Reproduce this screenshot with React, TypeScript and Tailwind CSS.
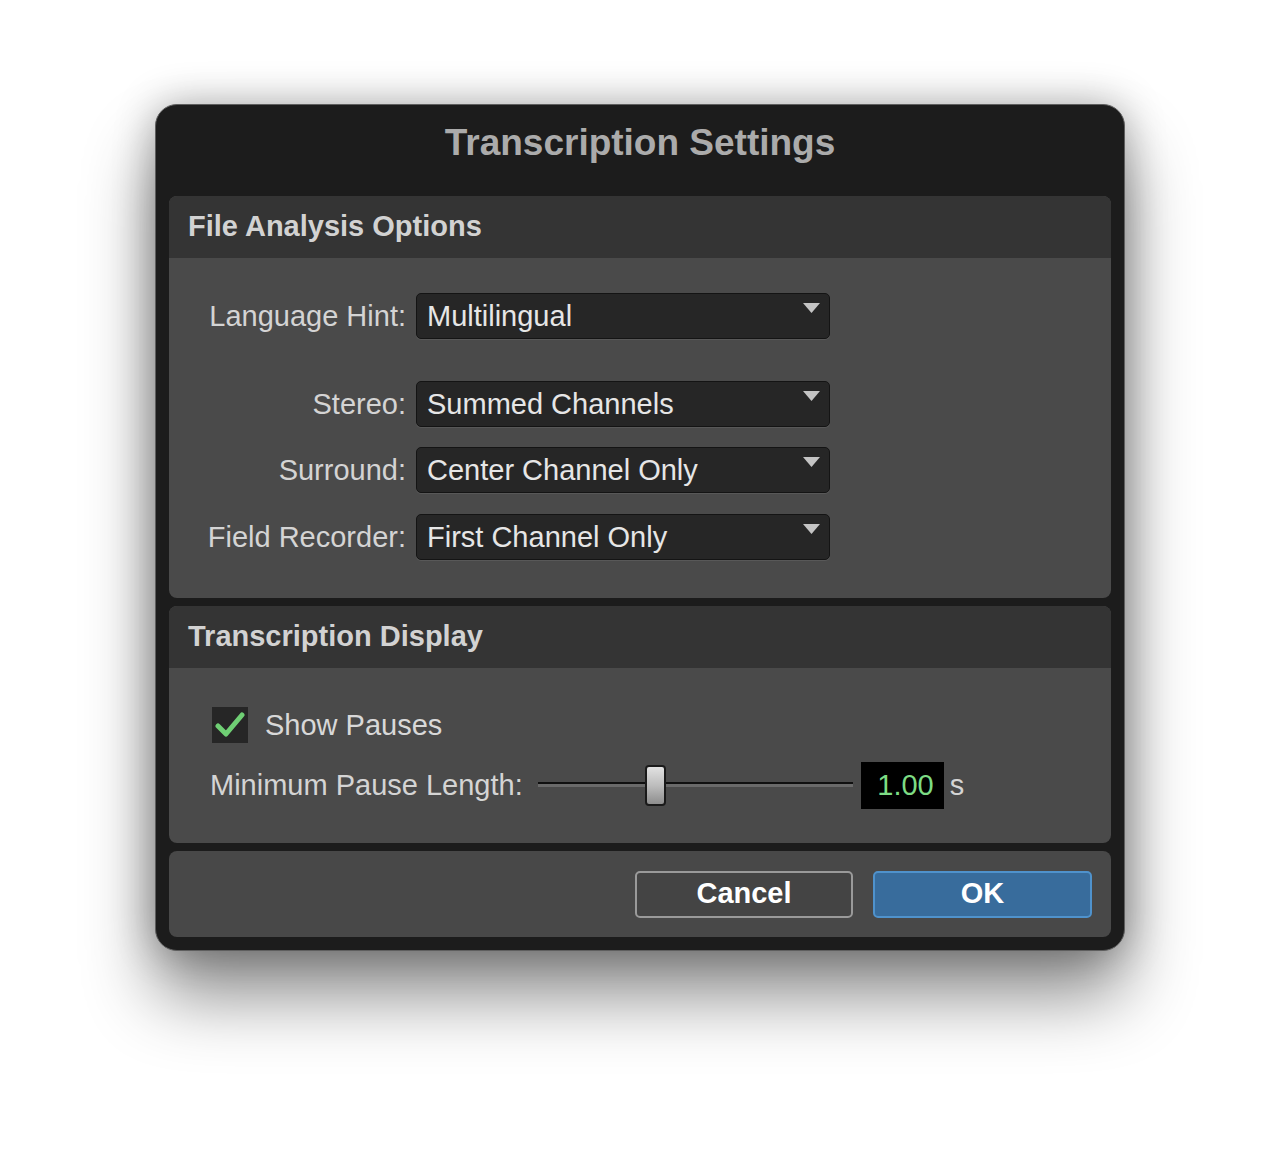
import React from 'react';

const font = { fontFamily: '"Liberation Sans", Arial, sans-serif' };

const Select: React.FC<{ value: string }> = ({ value }) => (
  <div className="relative flex h-[46px] w-[414px] items-center rounded-[5px] border border-[#141414] bg-[#262626] pl-[10px] text-[29px] text-[#e6e6e6] shadow-[0_1px_0_rgba(255,255,255,0.08)]">
    <span className="leading-none">{value}</span>
    {/* dropdown arrow */}
    <svg className="absolute right-[9px] top-[9px]" width="17" height="10" viewBox="0 0 17 10">
      <path d="M0 0 L17 0 L8.5 10 Z" fill="#c4c4c4" />
    </svg>
  </div>
);

const Row: React.FC<{ label: string; value: string; className?: string }> = ({ label, value, className }) => (
  <div className={`flex h-[46px] items-center ${className ?? ''}`}>
    <div className="w-[247px] pr-[10px] text-right text-[29px] leading-none text-[#d4d4d4]">{label}</div>
    <Select value={value} />
  </div>
);

const SectionHeader: React.FC<{ title: string }> = ({ title }) => (
  <div className="flex h-[62px] items-center bg-[#343434] pl-[19px] text-[29px] font-bold text-[#d2d2d2]">
    {title}
  </div>
);

const App: React.FC = () => {
  return (
    <div className="min-h-[1155px] bg-white pt-[104px]" style={font}>
      <div className="mx-auto flex w-[970px] flex-col rounded-[22px] border border-[#5e5e5e] bg-[#1c1c1c] px-[13px] pb-[13px] shadow-[0_45px_70px_rgba(0,0,0,0.45),0_0_40px_rgba(0,0,0,0.3)]">
        {/* title */}
        <div className="flex h-[91px] items-center justify-center pb-[16px] text-[37px] font-bold leading-none text-[#ababab]">
          Transcription Settings
        </div>

        {/* File Analysis Options */}
        <div className="overflow-hidden rounded-[8px] bg-[#4a4a4a]">
          <SectionHeader title="File Analysis Options" />
          <div className="flex flex-col pb-[38px] pt-[35px]">
            <Row label="Language Hint:" value="Multilingual" />
            <Row label="Stereo:" value="Summed Channels" className="mt-[42px]" />
            <Row label="Surround:" value="Center Channel Only" className="mt-[20px]" />
            <Row label="Field Recorder:" value="First Channel Only" className="mt-[21px]" />
          </div>
        </div>

        {/* Transcription Display */}
        <div className="mt-[8px] overflow-hidden rounded-[8px] bg-[#4a4a4a]">
          <SectionHeader title="Transcription Display" />
          <div className="flex flex-col pb-[34px] pl-[43px] pt-[39px]">
            <div className="flex h-[36px] items-center">
              <div className="flex h-[36px] w-[36px] items-center justify-center bg-[#262626]">
                <svg width="30" height="26" viewBox="0 0 30 26">
                  <path d="M3 14 L11 22 L27 3" fill="none" stroke="#6fcf74" strokeWidth="5" strokeLinecap="round" strokeLinejoin="round" />
                </svg>
              </div>
              <span className="ml-[17px] text-[29px] leading-none text-[#d8d8d8]">Show Pauses</span>
            </div>
            <div className="mt-[19px] flex h-[47px] items-center">
              <span className="-ml-[2px] text-[29px] leading-none text-[#d4d4d4]">Minimum Pause Length:</span>
              {/* slider */}
              <div className="relative ml-[15px] h-[47px] w-[315px]">
                <div className="absolute left-0 right-0 top-[20px] h-[2px] bg-[#101010]" />
                <div className="absolute left-0 right-0 top-[22px] h-[3px] bg-[#6a6a6a]" />
                <div className="absolute left-[107px] top-[3px] h-[41px] w-[21px] rounded-[4px] border-2 border-[#1a1a1a] bg-gradient-to-b from-[#e2e2e2] via-[#bdbdbd] to-[#8e8e8e]" />
              </div>
              <div className="ml-[8px] flex h-[47px] w-[83px] items-center justify-end bg-black pr-[10px] text-[29px] leading-none text-[#7ddc84]">
                1.00
              </div>
              <span className="ml-[6px] text-[29px] leading-none text-[#d4d4d4]">s</span>
            </div>
          </div>
        </div>

        {/* footer */}
        <div className="mt-[8px] flex h-[86px] items-center justify-end rounded-[8px] bg-[#484848] pr-[19px]">
          <button className="flex h-[47px] w-[218px] items-center justify-center rounded-[5px] border-2 border-[#9a9a9a] bg-[#444444] text-[29px] font-bold text-white">
            Cancel
          </button>
          <button className="ml-[20px] flex h-[47px] w-[219px] items-center justify-center rounded-[5px] border-2 border-[#4f92cc] bg-[#386c9c] text-[29px] font-bold text-white">
            OK
          </button>
        </div>
      </div>
    </div>
  );
};

export default App;
